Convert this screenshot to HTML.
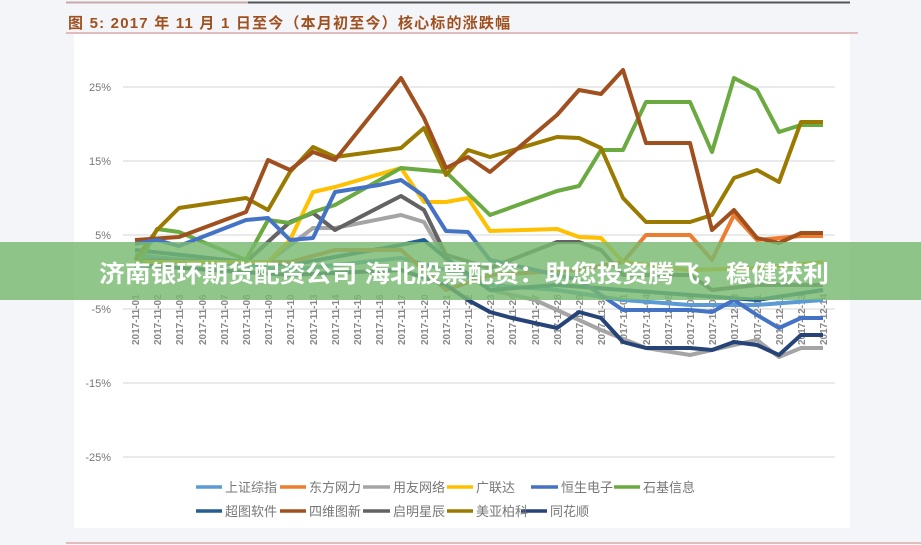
<!DOCTYPE html>
<html><head><meta charset="utf-8"><style>
html,body{margin:0;padding:0;background:#f3f5f9;width:921px;height:545px;overflow:hidden;font-family:"Liberation Sans","Noto Sans CJK SC",sans-serif}
</style></head><body>
<svg width="921" height="545" xmlns="http://www.w3.org/2000/svg" style="position:absolute;left:0;top:0">
<rect width="921" height="545" fill="#f3f5f9"/>
<line x1="66" y1="2.5" x2="248" y2="2.5" stroke="#c9a9a6" stroke-width="2"/>
<line x1="248" y1="2.5" x2="850" y2="2.5" stroke="#555" stroke-width="2"/>
<text x="68" y="28" font-size="15" font-weight="bold" fill="#a0501e" letter-spacing="1.2" font-family="Liberation Sans,Noto Sans CJK SC,sans-serif">图 5: 2017 年 11 月 1 日至今（本月初至今）核心标的涨跌幅</text>
<line x1="66" y1="33" x2="858" y2="33" stroke="#d9aaa8" stroke-width="1.5"/>
<rect x="74" y="34" width="776" height="494" fill="#fff"/>
<g stroke="#e3e3e3" stroke-width="1.5">
<line x1="123" y1="87" x2="835" y2="87"/><line x1="123" y1="161" x2="835" y2="161"/><line x1="123" y1="235" x2="835" y2="235"/>
<line x1="123" y1="309" x2="835" y2="309"/><line x1="123" y1="383" x2="835" y2="383"/><line x1="123" y1="457" x2="835" y2="457"/>
</g>
<g font-size="11" fill="#777" text-anchor="end">
<text x="111" y="91">25%</text><text x="111" y="165">15%</text><text x="111" y="239">5%</text>
<text x="111" y="313">-5%</text><text x="111" y="387">-15%</text><text x="111" y="461">-25%</text>
</g>
<g font-size="10" fill="#888" font-weight="bold">
<text transform="translate(139,345) rotate(-90)">2017-11-01</text><text transform="translate(161,345) rotate(-90)">2017-11-02</text><text transform="translate(183,345) rotate(-90)">2017-11-03</text><text transform="translate(206,345) rotate(-90)">2017-11-06</text><text transform="translate(228,345) rotate(-90)">2017-11-07</text><text transform="translate(250,345) rotate(-90)">2017-11-08</text><text transform="translate(272,345) rotate(-90)">2017-11-09</text><text transform="translate(294,345) rotate(-90)">2017-11-10</text><text transform="translate(317,345) rotate(-90)">2017-11-13</text><text transform="translate(339,345) rotate(-90)">2017-11-14</text><text transform="translate(361,345) rotate(-90)">2017-11-15</text><text transform="translate(383,345) rotate(-90)">2017-11-16</text><text transform="translate(405,345) rotate(-90)">2017-11-17</text><text transform="translate(428,345) rotate(-90)">2017-11-20</text><text transform="translate(450,345) rotate(-90)">2017-11-21</text><text transform="translate(472,345) rotate(-90)">2017-11-22</text><text transform="translate(494,345) rotate(-90)">2017-11-23</text><text transform="translate(516,345) rotate(-90)">2017-11-24</text><text transform="translate(539,345) rotate(-90)">2017-11-27</text><text transform="translate(561,345) rotate(-90)">2017-11-28</text><text transform="translate(583,345) rotate(-90)">2017-11-29</text><text transform="translate(605,345) rotate(-90)">2017-11-30</text><text transform="translate(627,345) rotate(-90)">2017-12-01</text><text transform="translate(650,345) rotate(-90)">2017-12-04</text><text transform="translate(672,345) rotate(-90)">2017-12-05</text><text transform="translate(694,345) rotate(-90)">2017-12-06</text><text transform="translate(716,345) rotate(-90)">2017-12-07</text><text transform="translate(738,345) rotate(-90)">2017-12-08</text><text transform="translate(761,345) rotate(-90)">2017-12-11</text><text transform="translate(783,345) rotate(-90)">2017-12-12</text><text transform="translate(805,345) rotate(-90)">2017-12-13</text><text transform="translate(827,345) rotate(-90)">2017-12-14</text>
</g>
<g fill="none" stroke-width="4" stroke-linejoin="round">
<polyline stroke="#a5a5a5" points="135,262 268,262 313,228 335,228 401,215 424,222 446,260 490,290 535,300 601,330 646,348 690,355 712,350 734,345 757,340 779,357 801,348 823,348"/>
<polyline stroke="#5b9bd5" points="135,255 290,270 401,258 446,270 490,285 557,290 623,300 690,305 757,305 823,300"/>
<polyline stroke="#255e91" points="135,250 246,262 290,265 401,245 424,240 446,258 490,290 557,285 623,290 690,295 757,300 823,290"/>
<polyline stroke="#636363" points="135,260 246,262 290,222 313,213 335,230 401,196 424,210 446,255 490,268 557,242 579,242 601,250 623,275 690,275 712,290 757,285 823,285"/>
<polyline stroke="#ed7d31" points="135,262 290,262 335,250 401,250 446,290 490,275 579,270 623,262 646,235 690,235 712,260 734,215 757,240 779,238 801,236 823,236"/>
<polyline stroke="#ffc000" points="135,262 268,262 290,240 313,192 335,187 401,168 424,202 446,202 468,198 490,231 557,229 579,237 601,238 623,262 690,270 757,268 823,262"/>
<polyline stroke="#6aaa40" points="135,272 157,229 179,232 246,260 268,220 290,223 313,212 335,205 401,168 446,172 490,215 557,191 579,186 601,150 623,150 646,102 690,102 712,152 734,78 757,90 779,132 801,125 823,125"/>
<polyline stroke="#9a7a00" points="135,260 157,230 179,208 246,198 268,210 290,172 313,147 335,157 401,148 424,128 446,175 468,150 490,157 557,137 579,138 601,148 623,198 646,222 690,222 712,215 734,178 757,170 779,182 801,122 823,122"/>
<polyline stroke="#a0501e" points="135,240 179,237 246,212 268,160 290,170 313,152 335,160 401,78 424,118 446,168 468,157 490,172 557,115 579,90 601,94 623,70 646,143 690,143 712,230 734,210 757,238 779,243 801,233 823,233"/>
<polyline stroke="#4472c4" points="135,244 157,240 179,246 246,220 268,218 290,240 313,238 335,192 379,185 401,180 424,196 446,231 468,232 490,260 535,270 579,280 601,295 623,310 690,310 712,312 734,300 757,315 779,328 801,318 823,318"/>
<polyline stroke="#264478" points="135,265 290,275 401,270 446,285 468,300 490,312 512,318 557,328 579,312 601,318 623,342 646,348 690,348 712,350 734,342 757,345 779,355 801,335 823,335"/>
</g>
<g stroke-width="3.5">
<line x1="196" y1="487" x2="222" y2="487" stroke="#5b9bd5"/><line x1="280" y1="487" x2="306" y2="487" stroke="#ed7d31"/><line x1="363" y1="487" x2="390" y2="487" stroke="#a5a5a5"/><line x1="447" y1="487" x2="473" y2="487" stroke="#ffc000"/><line x1="531" y1="487" x2="558" y2="487" stroke="#4472c4"/><line x1="614" y1="487" x2="640" y2="487" stroke="#6aaa40"/>
<line x1="196" y1="511" x2="222" y2="511" stroke="#255e91"/><line x1="280" y1="511" x2="306" y2="511" stroke="#a0501e"/><line x1="363" y1="511" x2="390" y2="511" stroke="#636363"/><line x1="447" y1="511" x2="473" y2="511" stroke="#9a7a00"/><line x1="521" y1="511" x2="547" y2="511" stroke="#264478"/>
</g>
<g font-size="13" fill="#777">
<text x="225" y="492">上证综指</text><text x="309" y="492">东方网力</text><text x="393" y="492">用友网络</text><text x="476" y="492">广联达</text><text x="561" y="492">恒生电子</text><text x="643" y="492">石基信息</text>
<text x="225" y="516">超图软件</text><text x="309" y="516">四维图新</text><text x="393" y="516">启明星辰</text><text x="476" y="516">美亚柏科</text><text x="550" y="516">同花顺</text>
</g>
<line x1="66" y1="543" x2="921" y2="543" stroke="#d9aaa8" stroke-width="1.5"/>
<rect x="0" y="242" width="921" height="58" fill="#79b970" fill-opacity="0.82"/>
<text x="464" y="282" font-size="24" font-weight="bold" fill="#fff" text-anchor="middle" textLength="730" lengthAdjust="spacingAndGlyphs" font-family="Liberation Sans,Noto Sans CJK SC,sans-serif">济南银环期货配资公司 海北股票配资：助您投资腾飞，稳健获利</text>
</svg>
</body></html>
